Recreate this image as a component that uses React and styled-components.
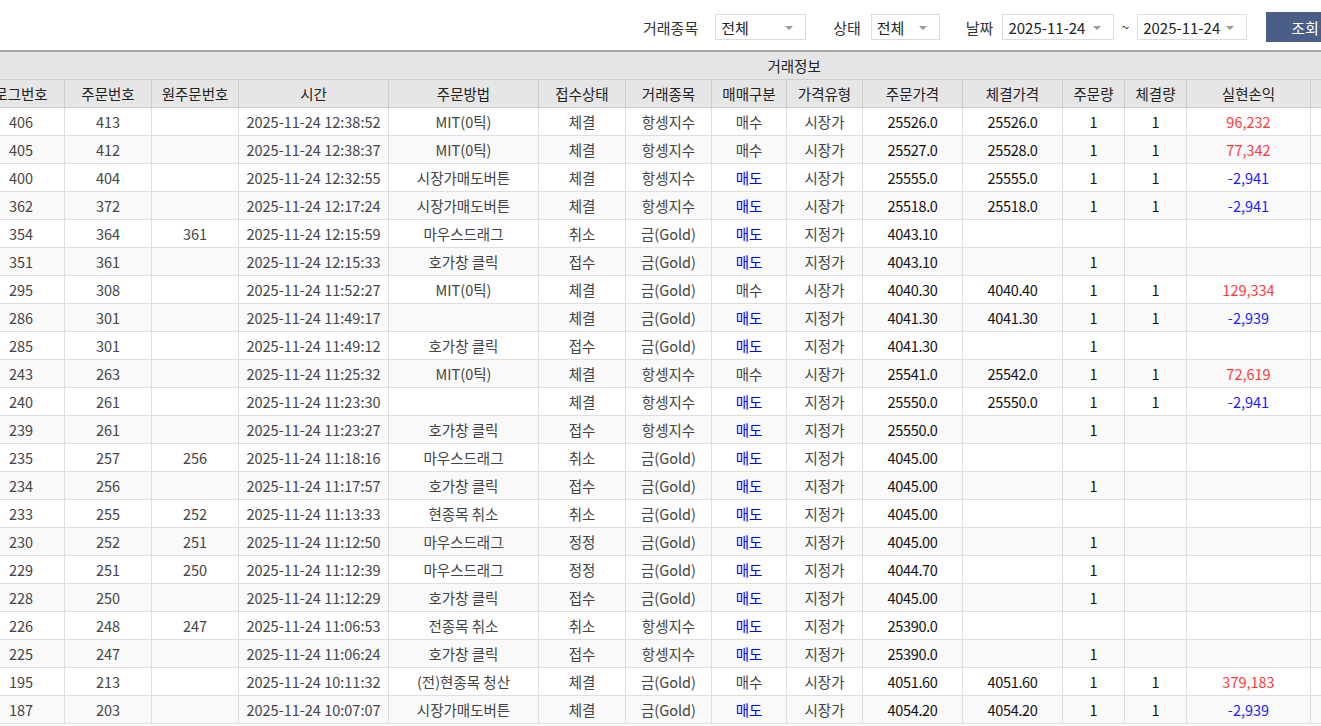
import React from 'react';
import styled, { createGlobalStyle } from 'styled-components';

const GlobalStyle = createGlobalStyle`
  html, body {
    margin: 0;
    padding: 0;
    background: #fff;
    overflow: hidden;
  }
  body {
    font-family: "Noto Sans CJK KR", "Noto Sans", sans-serif;
    font-size: 14px;
    color: #444;
  }
`;

const Page = styled.div`
  margin-left: -22px;
  width: 1700px;
`;

const Toolbar = styled.div`
  display: flex;
  align-items: center;
  height: 50px;
  box-sizing: border-box;
  padding: 12px 0 8px 665px;
`;

const Label = styled.span`
  font-size: 15px;
  color: #333;
  margin-right: ${(p) => p.gap || 12}px;
  margin-left: ${(p) => p.lead || 0}px;
`;

const SelectBox = styled.div`
  position: relative;
  display: flex;
  align-items: center;
  box-sizing: border-box;
  width: ${(p) => p.w}px;
  height: 26px;
  padding-left: 5px;
  border: 1px solid #dcdcdc;
  background: #fff;
  color: #222;
  font-size: 15px;

  &::after {
    content: '';
    position: absolute;
    right: 12px;
    top: 11px;
    border-left: 4px solid transparent;
    border-right: 4px solid transparent;
    border-top: 4px solid #999;
  }
`;

const Tilde = styled.span`
  color: #444;
  font-size: 14px;
  margin: 0 8px 0 7px;
`;

const SearchButton = styled.button`
  margin-left: 19px;
  width: 80px;
  height: 30px;
  border: none;
  background: #4a5e87;
  color: #fff;
  font-family: inherit;
  font-size: 15px;
  text-align: left;
  padding-left: 25px;
`;

const Table = styled.table`
  table-layout: fixed;
  border-collapse: separate;
  border-spacing: 0;
  border-top: 2px solid #a8a8a8;
  width: 1633px;
`;

const HeadCell = styled.th`
  height: 27px;
  padding: 0;
  font-weight: normal;
  font-size: 14.5px;
  color: #222;
  background: #e6e6e6;
  border-right: 1px solid #cfcfcf;
  border-bottom: 1px solid #cfcfcf;
  white-space: nowrap;
  overflow: hidden;
`;

const Row = styled.tr`
  background: ${(p) => (p.alt ? '#f9f9f9' : '#fff')};
`;

const Cell = styled.td`
  height: 27px;
  padding: 0;
  text-align: center;
  font-size: 14.5px;
  color: ${(p) => p.color || '#444'};
  letter-spacing: ${(p) => (p.tight ? '-0.3px' : '0')};
  border-right: 1px solid #dedede;
  border-bottom: 1px solid #dedede;
  white-space: nowrap;
  overflow: hidden;
`;

const widths = [87, 87, 87, 150, 150, 87, 86, 75, 76, 100, 100, 62, 62, 124, 150, 150];
const heads = ['로그번호', '주문번호', '원주문번호', '시간', '주문방법', '접수상태', '거래종목', '매매구분', '가격유형', '주문가격', '체결가격', '주문량', '체결량', '실현손익', '', ''];

const rows = [
  ['406', '413', '', '12:38:52', 'MIT(0틱)', '체결', '항셍지수', '매수', '시장가', '25526.0', '25526.0', '1', '1', '96,232'],
  ['405', '412', '', '12:38:37', 'MIT(0틱)', '체결', '항셍지수', '매수', '시장가', '25527.0', '25528.0', '1', '1', '77,342'],
  ['400', '404', '', '12:32:55', '시장가매도버튼', '체결', '항셍지수', '매도', '시장가', '25555.0', '25555.0', '1', '1', '-2,941'],
  ['362', '372', '', '12:17:24', '시장가매도버튼', '체결', '항셍지수', '매도', '시장가', '25518.0', '25518.0', '1', '1', '-2,941'],
  ['354', '364', '361', '12:15:59', '마우스드래그', '취소', '금(Gold)', '매도', '지정가', '4043.10', '', '', '', ''],
  ['351', '361', '', '12:15:33', '호가창 클릭', '접수', '금(Gold)', '매도', '지정가', '4043.10', '', '1', '', ''],
  ['295', '308', '', '11:52:27', 'MIT(0틱)', '체결', '금(Gold)', '매수', '시장가', '4040.30', '4040.40', '1', '1', '129,334'],
  ['286', '301', '', '11:49:17', '', '체결', '금(Gold)', '매도', '지정가', '4041.30', '4041.30', '1', '1', '-2,939'],
  ['285', '301', '', '11:49:12', '호가창 클릭', '접수', '금(Gold)', '매도', '지정가', '4041.30', '', '1', '', ''],
  ['243', '263', '', '11:25:32', 'MIT(0틱)', '체결', '항셍지수', '매수', '시장가', '25541.0', '25542.0', '1', '1', '72,619'],
  ['240', '261', '', '11:23:30', '', '체결', '항셍지수', '매도', '지정가', '25550.0', '25550.0', '1', '1', '-2,941'],
  ['239', '261', '', '11:23:27', '호가창 클릭', '접수', '항셍지수', '매도', '지정가', '25550.0', '', '1', '', ''],
  ['235', '257', '256', '11:18:16', '마우스드래그', '취소', '금(Gold)', '매도', '지정가', '4045.00', '', '', '', ''],
  ['234', '256', '', '11:17:57', '호가창 클릭', '접수', '금(Gold)', '매도', '지정가', '4045.00', '', '1', '', ''],
  ['233', '255', '252', '11:13:33', '현종목 취소', '취소', '금(Gold)', '매도', '지정가', '4045.00', '', '', '', ''],
  ['230', '252', '251', '11:12:50', '마우스드래그', '정정', '금(Gold)', '매도', '지정가', '4045.00', '', '1', '', ''],
  ['229', '251', '250', '11:12:39', '마우스드래그', '정정', '금(Gold)', '매도', '지정가', '4044.70', '', '1', '', ''],
  ['228', '250', '', '11:12:29', '호가창 클릭', '접수', '금(Gold)', '매도', '지정가', '4045.00', '', '1', '', ''],
  ['226', '248', '247', '11:06:53', '전종목 취소', '취소', '항셍지수', '매도', '지정가', '25390.0', '', '', '', ''],
  ['225', '247', '', '11:06:24', '호가창 클릭', '접수', '항셍지수', '매도', '지정가', '25390.0', '', '1', '', ''],
  ['195', '213', '', '10:11:32', '(전)현종목 청산', '체결', '금(Gold)', '매수', '시장가', '4051.60', '4051.60', '1', '1', '379,183'],
  ['187', '203', '', '10:07:07', '시장가매도버튼', '체결', '금(Gold)', '매도', '시장가', '4054.20', '4054.20', '1', '1', '-2,939'],
];

const cellColor = (i, v) => {
  if (i === 7 && v === '매도') return '#0000ff';
  if (i === 13 && v) return v.startsWith('-') ? '#1a1aff' : '#ff3b3b';
  if (i >= 9 && i <= 12) return '#111';
  return undefined;
};

export default function App() {
  return (
    <Page>
      <GlobalStyle />
      <Toolbar>
        <Label gap={17}>거래종목</Label>
        <SelectBox w={91}>전체</SelectBox>
        <Label lead={27} gap={10}>상태</Label>
        <SelectBox w={69}>전체</SelectBox>
        <Label lead={26} gap={9}>날짜</Label>
        <SelectBox w={112}>2025-11-24</SelectBox>
        <Tilde>~</Tilde>
        <SelectBox w={110}>2025-11-24</SelectBox>
        <SearchButton>조회</SearchButton>
      </Toolbar>
      <Table>
        <colgroup>
          {widths.map((w, i) => (
            <col key={i} style={{ width: w }} />
          ))}
        </colgroup>
        <thead>
          <tr>
            <HeadCell colSpan={widths.length}>거래정보</HeadCell>
          </tr>
          <tr>
            {heads.map((h, i) => (
              <HeadCell key={i}>{h}</HeadCell>
            ))}
          </tr>
        </thead>
        <tbody>
          {rows.map((r, ri) => (
            <Row key={ri} alt={ri % 2 === 1}>
              {r.map((v, i) => (
                <Cell key={i} color={cellColor(i, v)} tight={i >= 9 && i <= 10}>
                  {i === 3 ? `2025-11-24 ${v}` : v}
                </Cell>
              ))}
              <Cell />
              <Cell />
            </Row>
          ))}
        </tbody>
      </Table>
    </Page>
  );
}
